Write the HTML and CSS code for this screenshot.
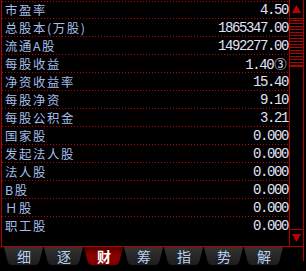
FILE: index.html
```html
<!DOCTYPE html>
<html lang="zh-CN">
<head>
<meta charset="utf-8">
<title>财务数据</title>
<link rel="stylesheet" href="styles.css">
</head>
<body>
<div class="frame">
  <div class="list">
    <div class="row"><span class="label">市盈率</span><span class="value">4.50</span></div>
    <div class="row"><span class="label">总股本(万股)</span><span class="value">1865347.00</span></div>
    <div class="row"><span class="label">流通A股</span><span class="value">1492277.00</span></div>
    <div class="row"><span class="label">每股收益</span><span class="value">1.40<span class="circ">③</span></span></div>
    <div class="row"><span class="label">净资收益率</span><span class="value">15.40</span></div>
    <div class="row"><span class="label">每股净资</span><span class="value">9.10</span></div>
    <div class="row"><span class="label">每股公积金</span><span class="value">3.21</span></div>
    <div class="row"><span class="label">国家股</span><span class="value">0.000</span></div>
    <div class="row"><span class="label">发起法人股</span><span class="value">0.000</span></div>
    <div class="row"><span class="label">法人股</span><span class="value">0.000</span></div>
    <div class="row"><span class="label">B股</span><span class="value">0.000</span></div>
    <div class="row"><span class="label">Ｈ股</span><span class="value">0.000</span></div>
    <div class="row"><span class="label">职工股</span><span class="value">0.000</span></div>
  </div>
  <div class="scroll">
    <div class="btn up"><svg width="9" height="8" viewBox="0 0 9 8"><polygon points="4.5,0 9,8 0,8" fill="#c00000"/></svg></div>
    <div class="thumb"></div>
    <div class="track"></div>
    <div class="btn down"><svg width="9" height="8" viewBox="0 0 9 8"><polygon points="0,0 9,0 4.5,8" fill="#c00000"/></svg></div>
  </div>
</div>
<div class="tabs">
  <div class="tab"><span>细</span></div>
  <div class="tab"><span>逐</span></div>
  <div class="tab active"><span>财</span></div>
  <div class="tab"><span>筹</span></div>
  <div class="tab"><span>指</span></div>
  <div class="tab"><span>势</span></div>
  <div class="tab"><span>解</span></div>
  <div class="tabs-end"></div>
</div>
</body>
</html>
```
FILE: styles.css
```css
* { box-sizing: border-box; }
html, body { margin: 0; padding: 0; background: #000; }
body {
  width: 306px;
  height: 271px;
  overflow: hidden;
  font-family: "Noto Sans CJK SC", sans-serif;
}
.frame {
  display: flex;
  margin-left: 1px;
  width: 303px;
  height: 247px;
  border-left: 1px solid #b00000;
  border-bottom: 1px solid #b00000;
}
.list {
  flex: 1;
  padding-top: 1px;
  background-image: linear-gradient(to right, #c00000 1px, transparent 1px);
  background-size: 3px 1px;
  background-repeat: repeat-x;
  background-position: 0 1px;
}
.row {
  display: flex;
  justify-content: space-between;
  align-items: center;
  height: 18px;
  padding: 1px 1px 0 3px;
  background-image: linear-gradient(to right, #c00000 1px, transparent 1px);
  background-size: 3px 1px;
  background-repeat: repeat-x;
  background-position: 0 100%;
}
.row:last-child { background: none; }
.label {
  color: #a6bde8;
  font-size: 12.4px;
  letter-spacing: 1.6px;
  line-height: 17px;
}
.value {
  color: #e0e0f6;
  font-family: "Liberation Mono", monospace;
  font-size: 14px;
  line-height: 17px;
  letter-spacing: -1.4px;
}
.circ {
  font-family: "Noto Sans CJK SC", sans-serif;
  font-size: 12.4px;
  letter-spacing: 0;
  margin-left: 1px;
  margin-right: 1.4px;
}
.scroll {
  width: 15px;
  display: flex;
  flex-direction: column;
  border-left: 1px solid #b00000;
  border-right: 1px solid #b00000;
}
.btn {
  display: flex;
  align-items: center;
  justify-content: center;
}
.btn svg { display: block; }
.up { height: 18px; }
.thumb {
  height: 49px;
  border-top: 1px solid #b00000;
  border-bottom: 1px solid #b00000;
  background: repeating-linear-gradient(#000 0 1px, #b00000 1px 2px, #000 2px 3px);
}
.track { flex: 1; }
.down {
  height: 17px;
  border-top: 1px solid #b00000;
}
.tabs {
  display: flex;
  width: 304px;
  height: 24px;
  padding-left: 4px;
}
.tab {
  position: relative;
  isolation: isolate;
  width: 40px;
  height: 18px;
  display: flex;
  justify-content: center;
  align-items: center;
  font-size: 14px;
  line-height: 18px;
  color: #b8d0f0;
}
.tab::before {
  content: "";
  position: absolute;
  inset: 0;
  z-index: -1;
  background: linear-gradient(#333333, #1c1c1c);
  clip-path: path('M0,0 H39 L35.5,14 Q34.5,18 31,18 H8 Q4.5,18 3.5,14 Z');
}
.tab span { position: relative; }
.tab.active { color: #ffffff; font-weight: bold; }
.tab.active::before {
  background: linear-gradient(#4a0000, #8c0000 45%, #7a0000);
}
.tabs-end {
  margin-left: auto;
  width: 1px;
  height: 14px;
  background: #b00000;
}
```
